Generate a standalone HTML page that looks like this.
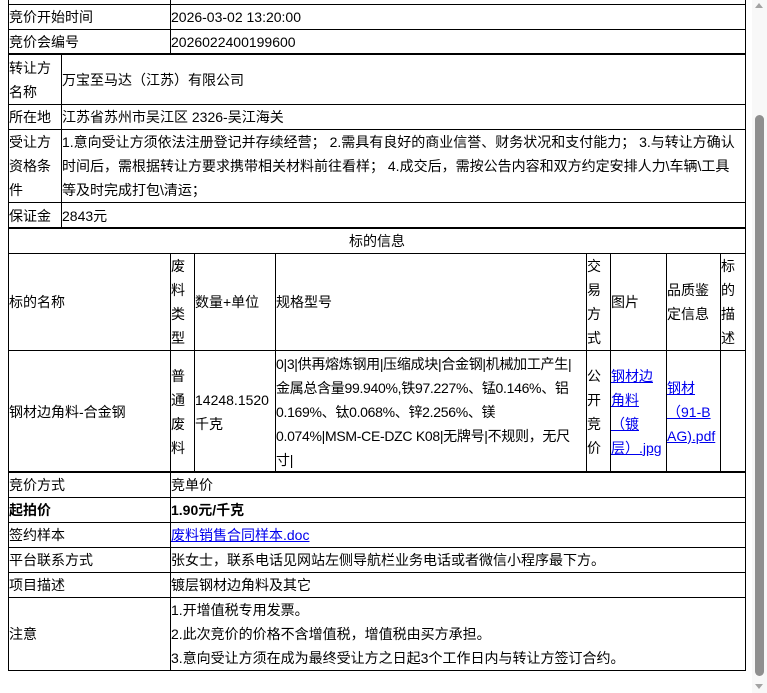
<!DOCTYPE html>
<html><head><meta charset="utf-8"><style>
body{margin:0;width:767px;height:693px;overflow:hidden;background:#fff;position:relative;font-family:"Liberation Sans","Noto Sans CJK SC",sans-serif;font-size:14px;color:#000}
.c{position:absolute;box-sizing:border-box;border:1px solid #000;display:flex;align-items:center;padding-left:0;line-height:24px;overflow:hidden}
.ctr{justify-content:center}
.nw{white-space:nowrap}
.hl{position:absolute;background:#000;height:2px;left:8px;width:738px}
a{color:#00e;text-decoration:underline}
b{font-weight:bold}
</style></head><body>
<div class="c" style="left:8px;top:-20px;width:163px;height:25px"></div>
<div class="c" style="left:170px;top:-20px;width:576px;height:25px"></div>
<div class="c" style="left:8px;top:4px;width:163px;height:26px">竞价开始时间</div>
<div class="c" style="left:170px;top:4px;width:576px;height:26px">2026-03-02 13:20:00</div>
<div class="c" style="left:8px;top:29px;width:163px;height:26px">竞价会编号</div>
<div class="c" style="left:170px;top:29px;width:576px;height:26px">2026022400199600</div>
<div class="hl" style="top:53px"></div>
<div class="c" style="left:8px;top:54px;width:54px;height:51px">转让方<br>名称</div>
<div class="c" style="left:61px;top:54px;width:685px;height:51px">万宝至马达（江苏）有限公司</div>
<div class="c" style="left:8px;top:104px;width:54px;height:26px">所在地</div>
<div class="c" style="left:61px;top:104px;width:685px;height:26px">江苏省苏州市吴江区 2326-吴江海关</div>
<div class="c" style="left:8px;top:129px;width:54px;height:74px">受让方<br>资格条<br>件</div>
<div class="c nw" style="left:61px;top:129px;width:685px;height:74px">1.意向受让方须依法注册登记并存续经营； 2.需具有良好的商业信誉、财务状况和支付能力； 3.与转让方确认<br>时间后，需根据转让方要求携带相关材料前往看样； 4.成交后，需按公告内容和双方约定安排人力\车辆\工具<br>等及时完成打包\清运；</div>
<div class="c" style="left:8px;top:202px;width:54px;height:27px">保证金</div>
<div class="c" style="left:61px;top:202px;width:685px;height:27px">2843元</div>
<div class="hl" style="top:227px"></div>
<div class="c ctr" style="left:8px;top:228px;width:738px;height:26px">标的信息</div>
<div class="c" style="left:8px;top:253px;width:163px;height:98px">标的名称</div>
<div class="c" style="left:170px;top:253px;width:25px;height:98px">废<br>料<br>类<br>型</div>
<div class="c" style="left:194px;top:253px;width:82px;height:98px">数量+单位</div>
<div class="c" style="left:275px;top:253px;width:312px;height:98px">规格型号</div>
<div class="c" style="left:586px;top:253px;width:25px;height:98px">交<br>易<br>方<br>式</div>
<div class="c" style="left:610px;top:253px;width:57px;height:98px">图片</div>
<div class="c" style="left:666px;top:253px;width:55px;height:98px">品质鉴<br>定信息</div>
<div class="c" style="left:720px;top:253px;width:26px;height:98px">标<br>的<br>描<br>述</div>
<div class="c" style="left:8px;top:350px;width:163px;height:123px">钢材边角料-合金钢</div>
<div class="c" style="left:170px;top:350px;width:25px;height:123px">普<br>通<br>废<br>料</div>
<div class="c" style="left:194px;top:350px;width:82px;height:123px">14248.1520<br>千克</div>
<div class="c nw" style="left:275px;top:350px;width:312px;height:123px;letter-spacing:-0.3px">0|3|供再熔炼钢用|压缩成块|合金钢|机械加工产生|<br>金属总含量99.940%,铁97.227%、锰0.146%、铝<br>0.169%、钛0.068%、锌2.256%、镁<br>0.074%|MSM-CE-DZC K08|无牌号|不规则，无尺<br>寸|</div>
<div class="c" style="left:586px;top:350px;width:25px;height:123px">公<br>开<br>竞<br>价</div>
<div class="c nw" style="left:610px;top:350px;width:57px;height:123px"><a>钢材边<br>角料<br>（镀<br>层）.jpg</a></div>
<div class="c nw" style="left:666px;top:350px;width:55px;height:123px"><a>钢材<br>（91-B<br>AG).pdf</a></div>
<div class="c" style="left:720px;top:350px;width:26px;height:123px"></div>
<div class="hl" style="top:471px"></div>
<div class="c" style="left:8px;top:472px;width:163px;height:26px">竞价方式</div>
<div class="c" style="left:170px;top:472px;width:576px;height:26px">竞单价</div>
<div class="c" style="left:8px;top:497px;width:163px;height:26px"><b>起拍价</b></div>
<div class="c" style="left:170px;top:497px;width:576px;height:26px"><b>1.90元/千克</b></div>
<div class="c" style="left:8px;top:522px;width:163px;height:26px">签约样本</div>
<div class="c" style="left:170px;top:522px;width:576px;height:26px"><a>废料销售合同样本.doc</a></div>
<div class="c" style="left:8px;top:547px;width:163px;height:26px">平台联系方式</div>
<div class="c" style="left:170px;top:547px;width:576px;height:26px">张女士，联系电话见网站左侧导航栏业务电话或者微信小程序最下方。</div>
<div class="c" style="left:8px;top:572px;width:163px;height:26px">项目描述</div>
<div class="c" style="left:170px;top:572px;width:576px;height:26px">镀层钢材边角料及其它</div>
<div class="c" style="left:8px;top:597px;width:163px;height:74px">注意</div>
<div class="c" style="left:170px;top:597px;width:576px;height:74px">1.开增值税专用发票。<br>2.此次竞价的价格不含增值税，增值税由买方承担。<br>3.意向受让方须在成为最终受让方之日起3个工作日内与转让方签订合约。</div>
<div style="position:absolute;left:752px;top:0;width:15px;height:693px;background:#f8f8f8"></div>
<div style="position:absolute;left:755px;top:3px;width:0;height:0;border-left:4px solid transparent;border-right:4px solid transparent;border-bottom:5px solid #a3a3a3"></div>
<div style="position:absolute;left:755px;top:684px;width:0;height:0;border-left:4px solid transparent;border-right:4px solid transparent;border-top:5px solid #a3a3a3"></div>
<div style="position:absolute;left:755px;top:115px;width:9px;height:561px;background:#8f8f8f;border-radius:5px"></div>
</body></html>
